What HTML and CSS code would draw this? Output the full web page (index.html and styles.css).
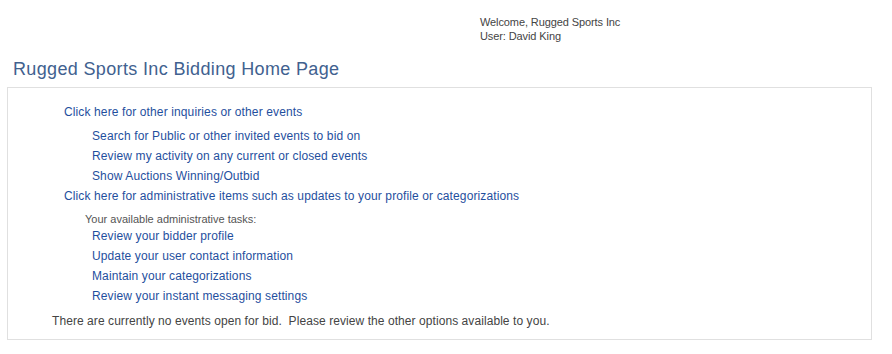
FILE: index.html
```html
<!DOCTYPE html>
<html>
<head>
<meta charset="utf-8">
<link rel="stylesheet" href="styles.css">
<title>Bidding Home Page</title>
</head>
<body>
<div class="welcome">
  <div>Welcome, Rugged Sports Inc</div>
  <div>User: David King</div>
</div>
<h1 class="title">Rugged Sports Inc Bidding Home Page</h1>
<div class="box">
  <div class="section">
    <a class="link" href="#">Click here for other inquiries or other events</a>
    <ul class="sublist first">
      <li><a class="link" href="#">Search for Public or other invited events to bid on</a></li>
      <li><a class="link" href="#">Review my activity on any current or closed events</a></li>
      <li><a class="link" href="#">Show Auctions Winning/Outbid</a></li>
    </ul>
    <a class="link" href="#">Click here for administrative items such as updates to your profile or categorizations</a>
    <div class="label">Your available administrative tasks:</div>
    <ul class="sublist">
      <li><a class="link" href="#">Review your bidder profile</a></li>
      <li><a class="link" href="#">Update your user contact information</a></li>
      <li><a class="link" href="#">Maintain your categorizations</a></li>
      <li><a class="link" href="#">Review your instant messaging settings</a></li>
    </ul>
  </div>
  <p class="note">There are currently no events open for bid.&nbsp; Please review the other options available to you.</p>
</div>
</body>
</html>
```

FILE: styles.css
```css
html, body {
  margin: 0;
  padding: 0;
  background: #ffffff;
}
body {
  font-family: "Liberation Sans", Arial, sans-serif;
  color: #333333;
}
.welcome {
  padding: 15px 0 0 480px;
  font-size: 11px;
  line-height: 14px;
  letter-spacing: -0.1px;
  color: #444444;
}
.title {
  margin: 14px 0 6px 0;
  padding-left: 13px;
  font-size: 18px;
  line-height: 24px;
  font-weight: normal;
  letter-spacing: 0.35px;
  color: #41618f;
}
.box {
  margin-left: 7px;
  border: 1px solid #e0e0e0;
  padding: 14px 0 8px 44px;
  box-sizing: border-box;
  width: 865px;
}
.section {
  padding-left: 12px;
}
.link {
  display: block;
  font-size: 12px;
  line-height: 20px;
  letter-spacing: 0.12px;
  color: #1f4f9e;
  text-decoration: none;
}
.sublist {
  list-style: none;
  margin: 0;
  padding: 0 0 0 28px;
}
.sublist.first {
  margin-top: 4px;
}
.label {
  margin-top: 7px;
  padding-left: 21px;
  font-size: 11px;
  line-height: 13px;
  color: #555555;
}
.note {
  margin: 5px 0 0 0;
  font-size: 12px;
  line-height: 20px;
  letter-spacing: 0.07px;
  color: #444444;
}
```
